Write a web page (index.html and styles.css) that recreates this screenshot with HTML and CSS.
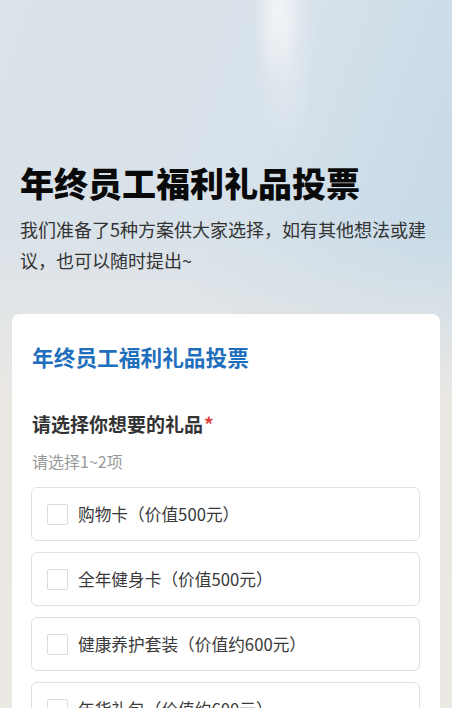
FILE: index.html
```html
<!DOCTYPE html>
<html lang="zh-CN">
<head>
<meta charset="utf-8">
<title>年终员工福利礼品投票</title>
<link rel="stylesheet" href="styles.css">
</head>
<body>
<div class="page">
  <header class="hero">
    <h1 class="hero-title">年终员工福利礼品投票</h1>
    <p class="hero-desc">我们准备了5种方案供大家选择，如有其他想法或建议，也可以随时提出~</p>
  </header>
  <section class="card">
    <h2 class="card-title">年终员工福利礼品投票</h2>
    <div class="question">
      <div class="q-label">请选择你想要的礼品<span class="req">*</span></div>
      <div class="q-hint">请选择1~2项</div>
      <ul class="options">
        <li class="option"><span class="box"></span><span class="opt-text">购物卡（价值500元）</span></li>
        <li class="option"><span class="box"></span><span class="opt-text">全年健身卡（价值500元）</span></li>
        <li class="option"><span class="box"></span><span class="opt-text">健康养护套装（价值约600元）</span></li>
        <li class="option"><span class="box"></span><span class="opt-text">年货礼包（价值约600元）</span></li>
      </ul>
    </div>
  </section>
</div>
</body>
</html>
```

FILE: styles.css
```css
* { box-sizing: border-box; }
html, body { margin: 0; padding: 0; }
body {
  font-family: "Noto Sans CJK SC", "Noto Sans", sans-serif;
  color: #333;
  min-height: 708px;
  background:
    radial-gradient(ellipse 24px 75px at 277px 10px, rgba(244,245,247,0.85), rgba(244,245,247,0)),
    radial-gradient(ellipse 32px 125px at 285px 30px, rgba(238,241,245,0.65), rgba(238,241,245,0)),
    linear-gradient(180deg, rgba(236,232,227,0) 0px, rgba(236,232,227,0) 230px, #ebe8e4 400px, #ece8e3 708px),
    linear-gradient(110deg, #dbe2e8 0%, #d8e2ea 40%, #c9dbe8 70%, #c4d8e8 100%);
}
.page { display: flex; flex-direction: column; }
.hero { padding: 161px 20px 0; }
.hero-title {
  margin: 0;
  font-size: 34px;
  line-height: 44px;
  font-weight: 900;
  color: #0a0a0a;
}
.hero-desc {
  margin: 9px 0 0;
  font-size: 18px;
  line-height: 31px;
  color: #333;
}
.card {
  margin: 38px 12px 0;
  background: #fff;
  border-radius: 8px;
  padding: 26px 20px 20px;
}
.card-title {
  margin: 0;
  font-size: 21.7px;
  line-height: 34px;
  font-weight: 700;
  color: #1f6fbd;
}
.question { margin-top: 36px; }
.q-label {
  font-size: 19px;
  line-height: 28px;
  font-weight: 700;
  color: #333;
}
.req { color: #e0403a; margin-left: 1px; }
.q-hint {
  margin-top: 11px;
  font-size: 16px;
  line-height: 24px;
  color: #999;
}
.options {
  list-style: none;
  margin: 14px 0 0 -1px;
  padding: 0;
  display: flex;
  flex-direction: column;
  gap: 11px;
}
.option {
  height: 54px;
  border: 1px solid #e0e0e0;
  border-radius: 6px;
  display: flex;
  align-items: center;
  padding: 0 15px;
  gap: 10px;
}
.box {
  width: 21px;
  height: 21px;
  border: 1px solid #dcdcdc;
  border-radius: 2px;
  flex: none;
}
.opt-text {
  font-size: 16.7px;
  line-height: 24px;
  color: #3a3a3a;
}
```
